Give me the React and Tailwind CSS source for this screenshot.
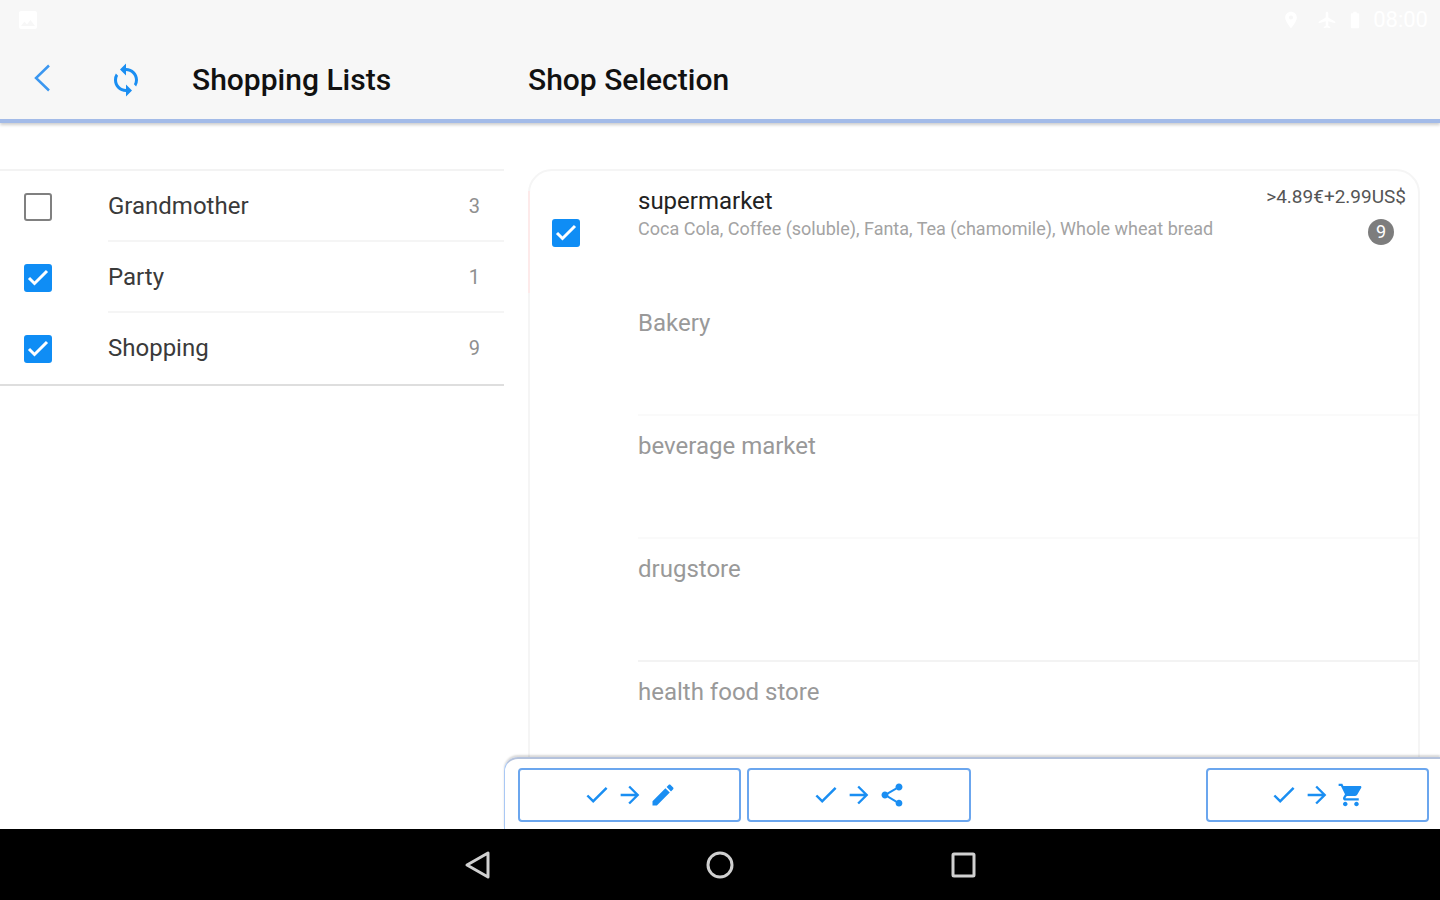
import React, { useState } from "react";
import {
  IoMdArrowForward,
  IoMdCart,
  IoMdCheckmark,
  IoMdCreate,
  IoMdShare,
} from "react-icons/io";
import {
  MdAirplanemodeActive,
  MdBatteryFull,
  MdImage,
  MdLocationOn,
  MdSync,
} from "react-icons/md";

const initialLists = [
  { id: 1, name: "Grandmother", count: 3, checked: false },
  { id: 2, name: "Party", count: 1, checked: true },
  { id: 3, name: "Shopping", count: 9, checked: true },
];

const emptyShops = [
  { id: 1, name: "Bakery", line: "border-[#fafafa]" },
  { id: 2, name: "beverage market", line: "border-[#fafafa]" },
  { id: 3, name: "drugstore", line: "border-[#f3f3f3]" },
  { id: 4, name: "health food store", line: "border-[#f3f3f3]" },
];

const CheckBox = ({ id, checked, onChange }) => (
  <span className="grid h-7 w-7 shrink-0">
    <input
      id={id}
      type="checkbox"
      checked={checked}
      onChange={onChange}
      className="col-start-1 row-start-1 h-7 w-7 appearance-none rounded-[3px] border-2 border-[#808080] bg-white checked:border-[#0f8df5] checked:bg-[#0f8df5]"
    />
    {checked && (
      <svg
        viewBox="0 0 28 28"
        className="pointer-events-none col-start-1 row-start-1 h-7 w-7"
        fill="none"
        stroke="white"
        strokeWidth="3"
      >
        <path d="M5 14l5.500 5.500L23 7" />
      </svg>
    )}
  </span>
);

const ActionButton = ({ label, icon: Icon, className = "" }) => (
  <button
    type="button"
    aria-label={label}
    className={`flex h-[54px] items-center justify-center gap-[5px] rounded-[4px] border-2 border-[#6ba6ee] text-[#1a8ef2] ${className}`}
  >
    <IoMdCheckmark size={28} />
    <IoMdArrowForward size={28} />
    <Icon size={28} />
  </button>
);

const StatusBar = () => (
  <div className="flex h-10 items-center justify-between pl-4 pr-3 text-white">
    <MdImage size={24} />
    <div className="flex items-center">
      <MdLocationOn size={20} className="mr-4" />
      <MdAirplanemodeActive size={20} className="mr-2" />
      <MdBatteryFull size={20} className="mr-2" />
      <span className="text-[22px] leading-6">08:00</span>
    </div>
  </div>
);

const Header = () => (
  <header className="z-10 border-b-4 border-[#a3bbe8] bg-[#f7f7f7] shadow-[0_2px_3px_rgba(0,0,0,0.2)]">
    <StatusBar />
    <div className="flex h-[79px] items-center text-[30px] font-medium leading-8 text-[#111]">
      <div className="flex w-[35%] items-center">
        <button
          type="button"
          aria-label="Back"
          className="flex h-8 w-[84px] justify-center text-[#3b97f0]"
        >
          <svg
            viewBox="0 0 20 28"
            className="h-7 w-5"
            fill="none"
            stroke="currentColor"
            strokeWidth="2.5"
          >
            <path d="M17 1.500L4 14L17 26.500" />
          </svg>
        </button>
        <button
          type="button"
          aria-label="Sync"
          className="flex h-9 w-[84px] items-start justify-center pb-1 text-[#1a8ef2]"
        >
          <MdSync size={36} />
        </button>
        <h1 className="pl-6">Shopping Lists</h1>
      </div>
      <h2 className="pl-6">Shop Selection</h2>
    </div>
  </header>
);

const NavBar = () => (
  <nav className="flex h-[71px] items-center justify-center gap-[211px] bg-black">
    <button type="button" aria-label="Back">
      <svg
        viewBox="0 0 32 32"
        className="h-8 w-8"
        fill="none"
        stroke="#d0d0d0"
        strokeWidth="3"
      >
        <path d="M27 4v24L6 16z" strokeLinejoin="round" />
      </svg>
    </button>
    <button type="button" aria-label="Home">
      <svg
        viewBox="0 0 32 32"
        className="h-8 w-8"
        fill="none"
        stroke="#d0d0d0"
        strokeWidth="3"
      >
        <circle cx="16" cy="16" r="12" />
      </svg>
    </button>
    <button type="button" aria-label="Recent apps">
      <svg
        viewBox="0 0 32 32"
        className="h-8 w-8"
        fill="none"
        stroke="#d0d0d0"
        strokeWidth="3"
      >
        <rect x="6" y="5" width="21" height="22" rx="1" />
      </svg>
    </button>
  </nav>
);

export default function App() {
  const [lists, setLists] = useState(initialLists);
  const [marketChecked, setMarketChecked] = useState(true);

  const toggleList = (id) => {
    setLists(
      lists.map((list) =>
        list.id === id ? { ...list, checked: !list.checked } : list
      )
    );
  };

  return (
    <div className="flex h-screen flex-col bg-white font-['Roboto',sans-serif]">
      <Header />
      <main className="flex min-h-0 flex-1">
        <section className="w-[35%] pt-[46px]">
          <ul className="border-b-2 border-t-2 border-b-[#dedede] border-t-[#f3f3f3]">
            {lists.map((list, index) => (
              <li key={list.id} className="flex h-[71px] items-center pl-6">
                <CheckBox
                  id={`list-${list.id}`}
                  checked={list.checked}
                  onChange={() => toggleList(list.id)}
                />
                <div
                  className={`ml-14 flex h-full flex-1 items-center justify-between border-b-2 pr-6 ${
                    index < lists.length - 1
                      ? "border-[#f5f5f5]"
                      : "border-transparent"
                  }`}
                >
                  <label
                    htmlFor={`list-${list.id}`}
                    className="text-[24px] leading-8 text-[#3a3a3a]"
                  >
                    {list.name}
                  </label>
                  <span className="text-[20px] leading-6 text-[#8f8f8f]">
                    {list.count}
                  </span>
                </div>
              </li>
            ))}
          </ul>
        </section>

        <section className="flex min-w-0 flex-1 flex-col">
          <div className="min-h-0 flex-1 overflow-y-auto pl-6 pr-5 pt-[46px] [scrollbar-width:none]">
            <ul className="rounded-[24px] border-2 border-[#f5f5f5]">
              <li className="flex h-[122px]">
                <div className="-ml-0.5 mt-5 w-[110px] border-l-2 border-[#fdeaea] pl-[22px] pt-7">
                  <CheckBox
                    id="shop-supermarket"
                    checked={marketChecked}
                    onChange={() => setMarketChecked(!marketChecked)}
                  />
                </div>
                <div className="min-w-0 flex-1 pt-4">
                  <label
                    htmlFor="shop-supermarket"
                    className="block text-[24px] leading-7 text-[#222]"
                  >
                    supermarket
                  </label>
                  <p className="truncate text-[18px] leading-7 text-[#a3a3a3]">
                    Coca Cola, Coffee (soluble), Fanta, Tea (chamomile), Whole
                    wheat bread
                  </p>
                </div>
                <div className="flex flex-col items-end pr-3 pt-3">
                  <span className="text-[19px] leading-7 text-[#555]">
                    &gt;4.89€+2.99US$
                  </span>
                  <span className="mr-3 mt-2 flex h-[26px] w-[26px] items-center justify-center rounded-full bg-[#7d7d7d] text-[18px] leading-6 text-white">
                    9
                  </span>
                </div>
              </li>
              {emptyShops.map((shop) => (
                <li
                  key={shop.id}
                  className={`ml-[108px] h-[123px] border-b-2 pt-4 text-[24px] leading-7 text-[#999] ${shop.line}`}
                >
                  {shop.name}
                </li>
              ))}
            </ul>
          </div>

          <footer className="grid grid-cols-4 gap-1.5 rounded-tl-[14px] border-l border-t-2 border-l-[#a9c8f5] border-t-[#b4c2dc] pb-[7px] pl-[13px] pr-[11px] pt-[9px] shadow-[0_-2px_2px_rgba(0,0,0,0.15)]">
            <ActionButton label="Edit checked items" icon={IoMdCreate} />
            <ActionButton label="Share checked items" icon={IoMdShare} />
            <ActionButton
              label="Go shopping"
              icon={IoMdCart}
              className="col-start-4"
            />
          </footer>
        </section>
      </main>
      <NavBar />
    </div>
  );
}
